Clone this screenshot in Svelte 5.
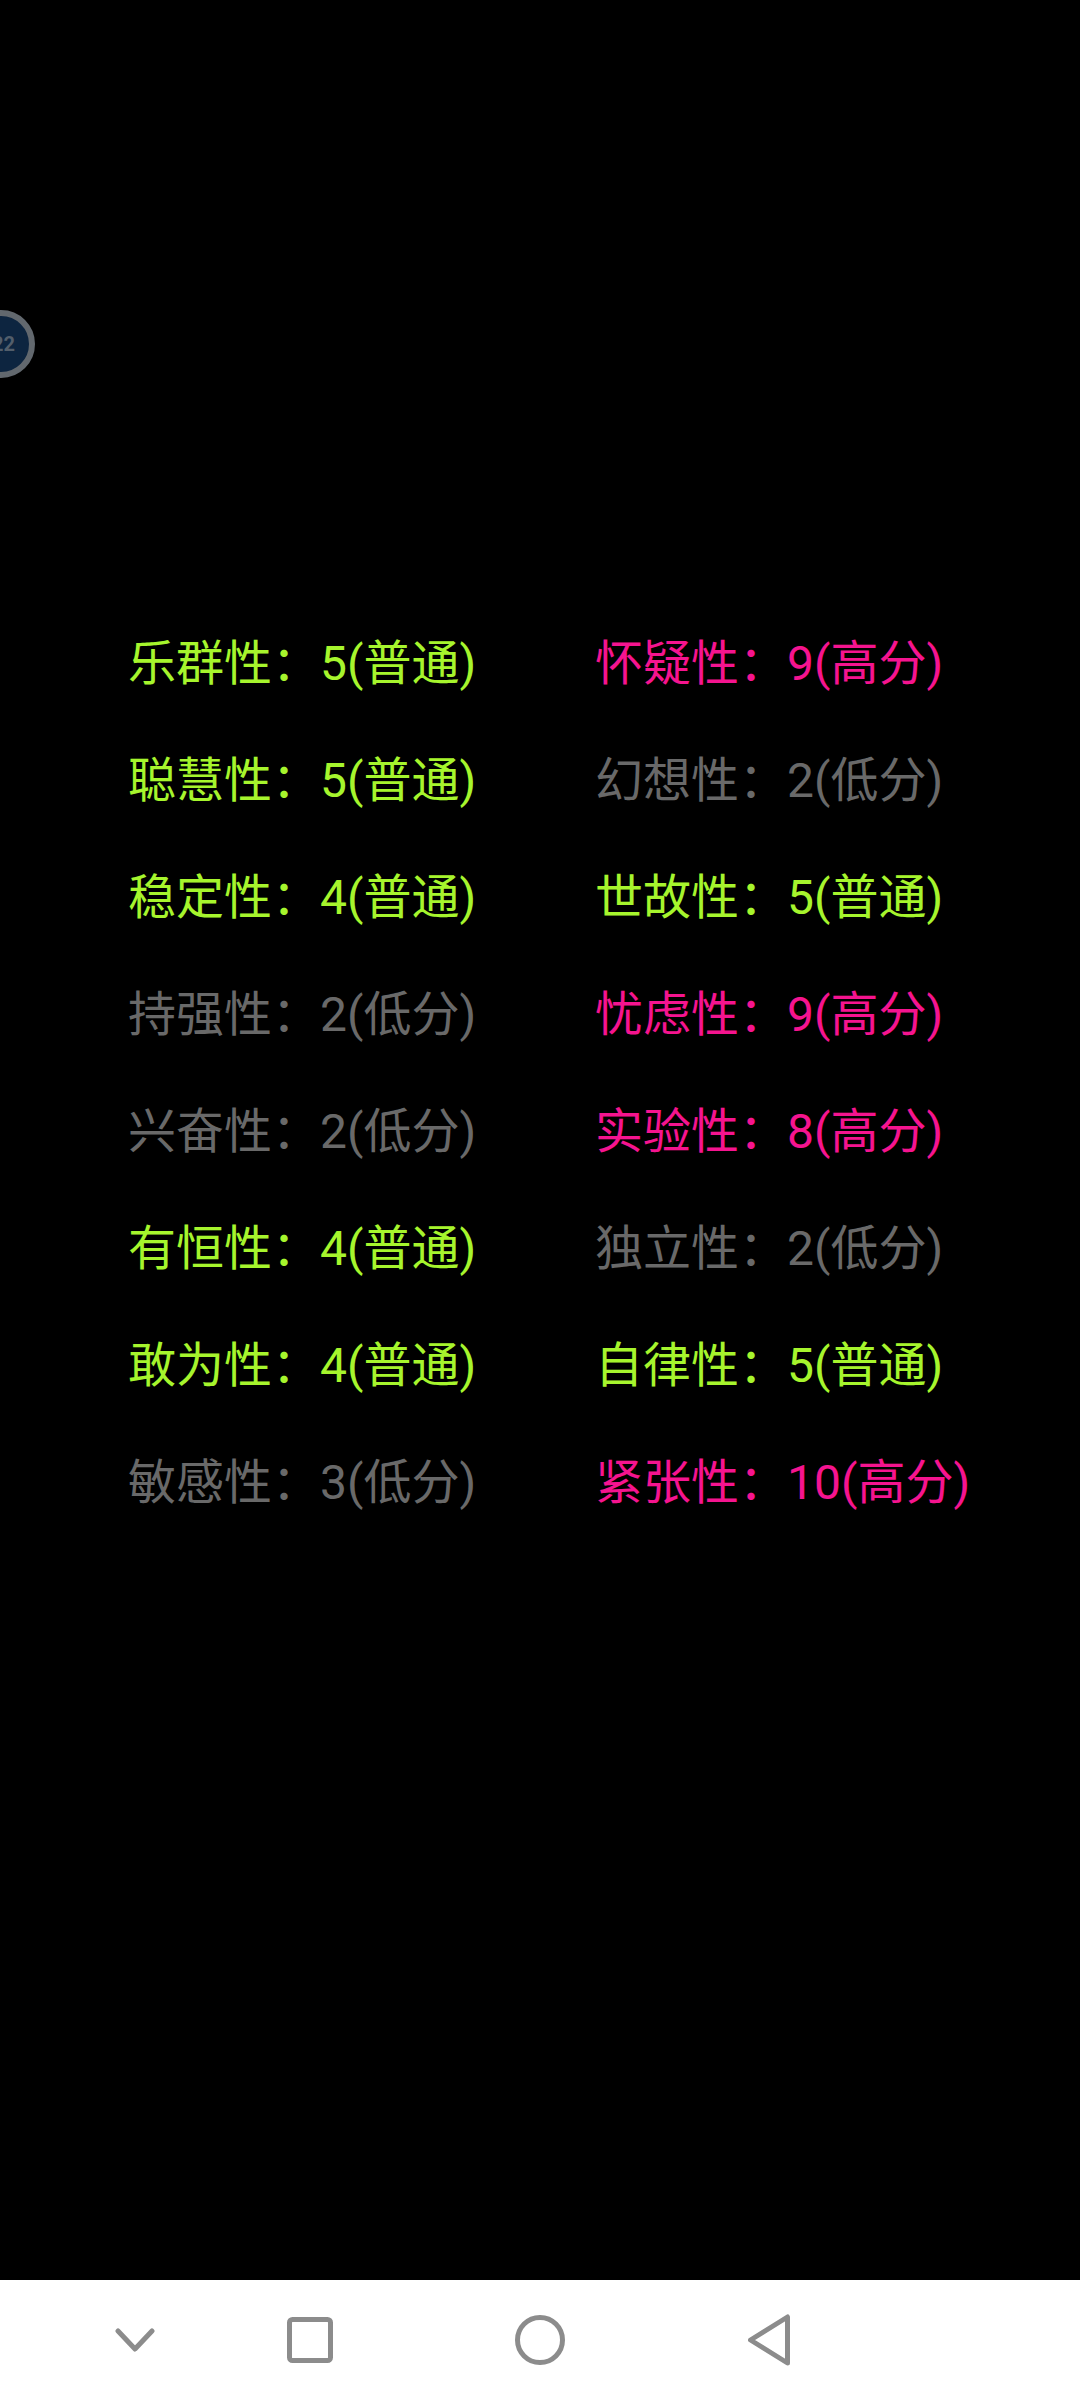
<script lang="ts">
	type Level = 'mid' | 'high' | 'low';

	const levelName: Record<Level, string> = { mid: '普通', high: '高分', low: '低分' };

	const factors: { name: string; score: number; level: Level }[] = [
		{ name: '乐群性', score: 5, level: 'mid' },
		{ name: '怀疑性', score: 9, level: 'high' },
		{ name: '聪慧性', score: 5, level: 'mid' },
		{ name: '幻想性', score: 2, level: 'low' },
		{ name: '稳定性', score: 4, level: 'mid' },
		{ name: '世故性', score: 5, level: 'mid' },
		{ name: '持强性', score: 2, level: 'low' },
		{ name: '忧虑性', score: 9, level: 'high' },
		{ name: '兴奋性', score: 2, level: 'low' },
		{ name: '实验性', score: 8, level: 'high' },
		{ name: '有恒性', score: 4, level: 'mid' },
		{ name: '独立性', score: 2, level: 'low' },
		{ name: '敢为性', score: 4, level: 'mid' },
		{ name: '自律性', score: 5, level: 'mid' },
		{ name: '敏感性', score: 3, level: 'low' },
		{ name: '紧张性', score: 10, level: 'high' }
	];
</script>

<div class="screen">
	<main class="content">
		<div class="ball"><span>22</span></div>

		<ul class="factors">
			{#each factors as f}
				<li class={f.level}>{f.name}：{f.score}({levelName[f.level]})</li>
			{/each}
		</ul>
	</main>

	<nav class="navbar">
		<button class="nav-btn chevron" aria-label="收起">
			<svg width="40" height="24" viewBox="0 0 40 24">
				<path d="M3 3 L20 21 L37 3" />
			</svg>
		</button>
		<button class="nav-btn" aria-label="最近">
			<svg width="46" height="46" viewBox="0 0 46 46">
				<rect x="2.5" y="2.5" width="41" height="41" rx="3" />
			</svg>
		</button>
		<button class="nav-btn" aria-label="主页">
			<svg width="50" height="50" viewBox="0 0 50 50">
				<circle cx="25" cy="25" r="22.5" />
			</svg>
		</button>
		<button class="nav-btn" aria-label="返回">
			<svg width="44" height="52" viewBox="0 0 44 52">
				<path d="M39.5 3 L39.5 49 L2.5 26 Z" />
			</svg>
		</button>
	</nav>
</div>

<style>
	:global(body) {
		background: #000;
	}

	.screen {
		display: flex;
		flex-direction: column;
		width: 1080px;
		height: 2400px;
		background: #000;
		font-family: Roboto, 'Noto Sans CJK SC', sans-serif;
	}

	.content {
		position: relative;
		flex: 1;
		padding: 605px 0 0 128px;
		overflow: hidden;
	}

	.ball {
		position: absolute;
		left: -33px;
		top: 310px;
		display: flex;
		align-items: center;
		justify-content: flex-end;
		box-sizing: border-box;
		width: 68px;
		height: 68px;
		padding-right: 14px;
		border: 6px solid #62686e;
		border-radius: 50%;
		background: #0d2540;
		color: #525e6b;
		font-size: 20px;
		font-weight: 700;
	}

	.factors {
		display: grid;
		grid-template-columns: 467px 1fr;
		grid-auto-rows: 117px;
		margin: 0;
		padding: 0;
		list-style: none;
	}

	.factors li {
		font-size: 48px;
		line-height: 117px;
		white-space: nowrap;
	}

	.mid {
		color: #a6f52d;
	}

	.high {
		color: #f5148f;
	}

	.low {
		color: #696969;
	}

	.navbar {
		display: flex;
		align-items: center;
		height: 120px;
		padding-left: 100px;
		background: #fff;
	}

	.nav-btn {
		display: flex;
		align-items: center;
		justify-content: center;
		width: 230px;
		height: 100%;
		padding: 0;
		border: none;
		background: none;
	}

	.nav-btn.chevron {
		width: 70px;
		margin-right: 25px;
	}

	.nav-btn svg {
		fill: none;
		stroke: #8c8c8c;
		stroke-width: 5;
		stroke-linecap: round;
		stroke-linejoin: round;
	}
</style>
